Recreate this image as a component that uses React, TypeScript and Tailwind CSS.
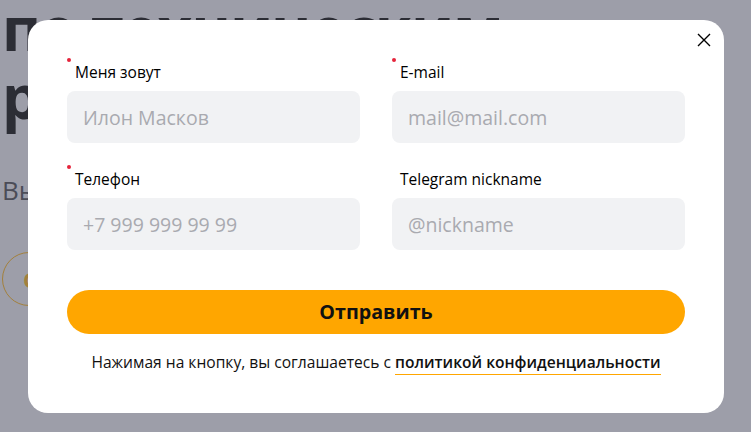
import React from 'react';

const Field: React.FC<{ label: string; placeholder: string; required?: boolean }> = ({
  label,
  placeholder,
  required,
}) => (
  <div className="flex flex-col">
    <label className="relative pl-[8px] text-[15.5px] leading-[20px] text-black">
      {required && (
        <span className="absolute left-[0px] top-[-4px] h-[4px] w-[4px] rounded-full bg-[#e5243b]" />
      )}
      {label}
    </label>
    <input
      placeholder={placeholder}
      className="mt-[9px] h-[52px] rounded-[8px] bg-[#f1f2f4] px-[16px] text-[19.5px] text-black outline-none placeholder:text-[#a9aab0]"
    />
  </div>
);

export default function App() {
  return (
    <div className="relative h-[432px] w-[751px] overflow-hidden bg-[#9d9ea9] font-['Open_Sans',sans-serif]">
      {/* page behind the overlay */}
      <div className="flex flex-col pl-[2px]">
        <div className="mt-[-6px] text-[60px] font-bold leading-[68px] tracking-[-1px] text-[#2c2d35] whitespace-nowrap">
          <div>по техническим</div>
          <div>работам</div>
        </div>
        <div className="mt-[42px] text-[26px] leading-[36px] text-[#4b4c57]">Вы можете</div>
        <div className="mt-[44px] flex h-[54px] w-[150px] items-center rounded-full border-[1.5px] border-[#a3803c] pl-[20px] text-[22px] font-bold text-[#a3803c]">
          Связаться
        </div>
      </div>

      {/* modal */}
      <div className="absolute left-[28px] top-[20px] w-[696px] rounded-[20px] bg-white px-[39px] pb-[41px] pt-[42px]">
        <button className="absolute right-[12px] top-[12px] flex h-[16px] w-[16px] items-center justify-center text-black">
          <svg width="14" height="14" viewBox="0 0 14 14" fill="none" stroke="currentColor" strokeWidth="1.4">
            <path d="M1 1L13 13M13 1L1 13" />
          </svg>
        </button>

        <div className="grid grid-cols-2 gap-x-[32px] gap-y-[26px]">
          <Field label="Меня зовут" placeholder="Илон Масков" required />
          <Field label="E-mail" placeholder="mail@mail.com" required />
          <Field label="Телефон" placeholder="+7 999 999 99 99" required />
          <Field label="Telegram nickname" placeholder="@nickname" />
        </div>

        <button className="mt-[40px] flex h-[44px] w-full items-center justify-center rounded-full bg-[#ffa600] text-[19.7px] font-bold text-[#111]">
          Отправить
        </button>

        <p className="mt-[18px] text-center text-[15.6px] leading-[20px] text-[#111]">
          Нажимая на кнопку, вы соглашаетесь с{' '}
          <a className="border-b-[1.5px] border-[#ffa600] pb-[1px] font-semibold">политикой конфиденциальности</a>
        </p>
      </div>
    </div>
  );
}
